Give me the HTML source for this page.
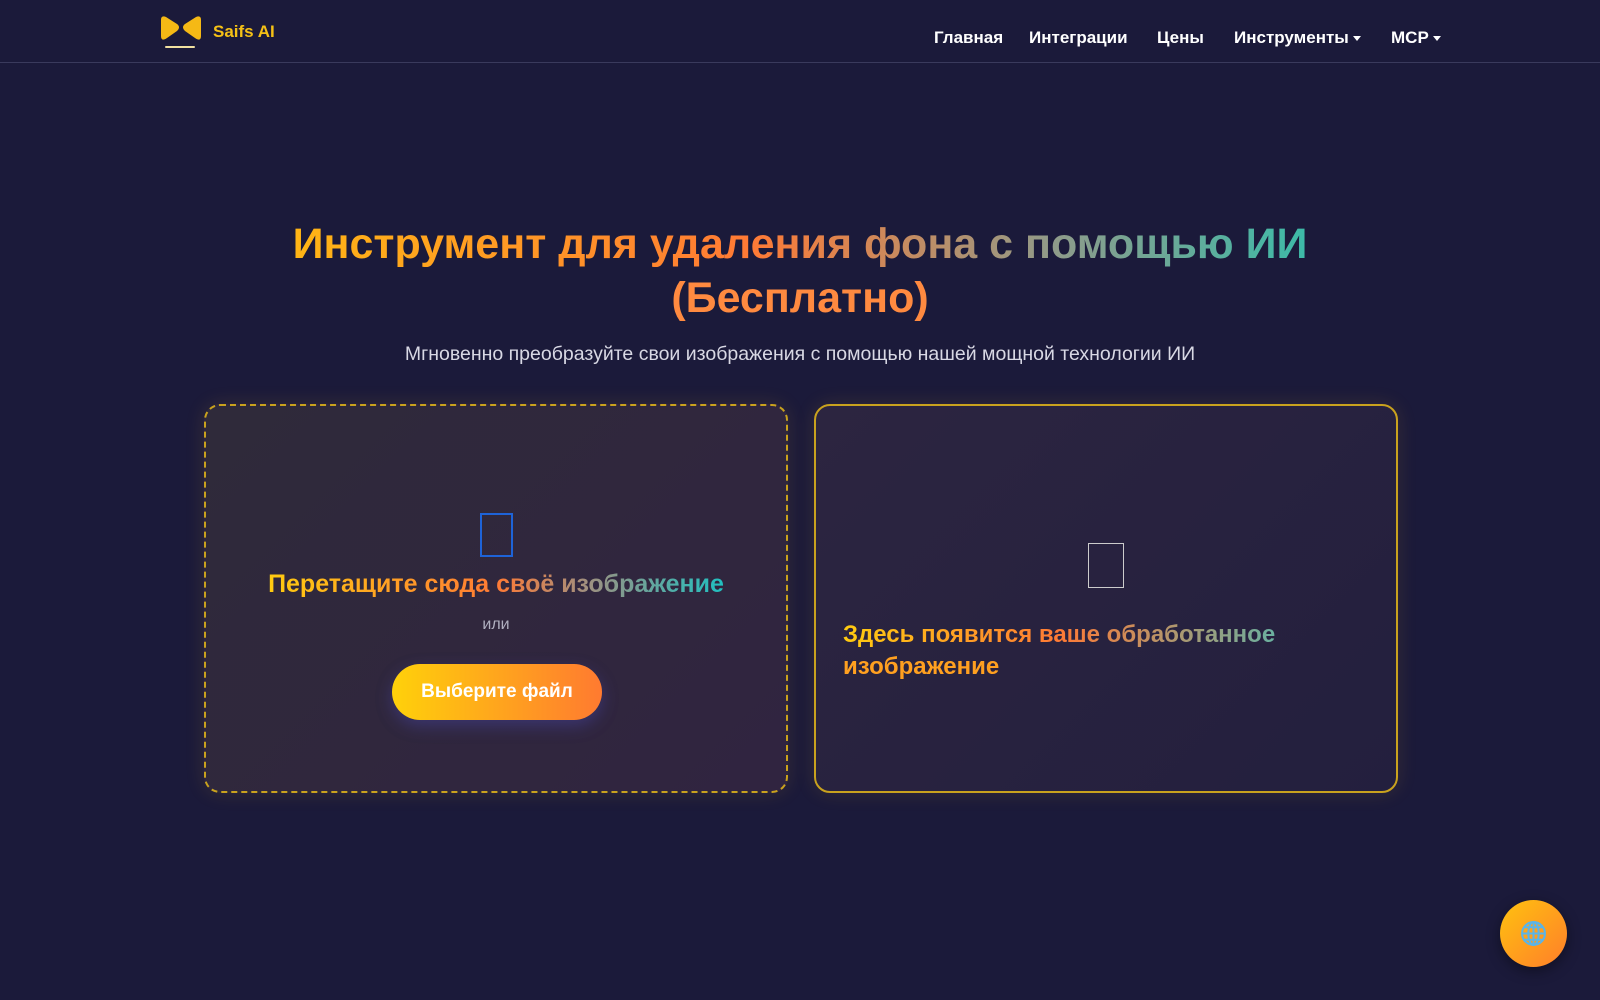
<!DOCTYPE html>
<html><head><meta charset="utf-8"><style>
*{margin:0;padding:0;box-sizing:border-box}
body{width:1600px;height:1000px;background:#1b1a3a;font-family:"Liberation Sans","DejaVu Sans",sans-serif;position:relative;overflow:hidden;color:#fff}
.hdr{position:absolute;left:0;top:0;width:1600px;height:63px;border-bottom:1px solid #3a3a5c}
.logo{position:absolute;left:159px;top:15px}
.brand{position:absolute;left:213px;top:22px;font-weight:bold;font-size:17px;color:#f5c116}
.nav a{position:absolute;top:28px;font-weight:bold;font-size:17px;color:#fff;text-decoration:none;white-space:nowrap}
.car{display:inline-block;width:0;height:0;border-left:4px solid transparent;border-right:4px solid transparent;border-top:5px solid #fff;vertical-align:middle;margin-left:4px}
.grad{background:linear-gradient(90deg,#ffb515 0%,#ff7a35 45%,#8f9b8a 75%,#3dbaa8 100%);-webkit-background-clip:text;background-clip:text;color:transparent}
h1{position:absolute;left:0;width:1600px;text-align:center;font-size:43px;font-weight:bold;line-height:54px}
.sub{position:absolute;top:343px;width:1600px;text-align:center;font-size:19.5px;color:#d8d8e4}
.card{position:absolute;top:404px;width:584px;height:389px;border-radius:16px;background:linear-gradient(135deg,#2f2a3a,#302440);box-shadow:0 0 20px rgba(255,180,40,.12)}
.l{left:204px;border:2px dashed #c9a21e}
.r{left:814px;border:2px solid #c9a21e;background:linear-gradient(135deg,#2c2540,#231f3e)}
.btn{position:absolute;left:186px;top:258px;width:210px;height:56px;border-radius:28px;background:linear-gradient(90deg,#ffd10a,#ff7a30);font-weight:bold;font-size:19px;text-align:center;line-height:56px;box-shadow:0 6px 16px rgba(80,80,200,.35)}
.globe{position:absolute;left:1500px;top:900px;width:67px;height:67px;border-radius:50%;background:linear-gradient(135deg,#ffc20f,#ff7e2a);box-shadow:0 4px 14px rgba(0,0,0,.4)}
</style></head><body>
<div class="hdr">
<svg class="logo" width="44" height="36" viewBox="0 0 44 36"><path d="M2 5 Q2 0 7 2 L18 9 Q22 12 18 16 L8 23 Q2 27 2 21Z" fill="#f5b915"/><path d="M42 5 Q42 0 37 2 L26 9 Q22 12 26 16 L36 23 Q42 27 42 21Z" fill="#f5b915"/><rect x="6" y="31" width="30" height="2" rx="1" fill="#f0e0a0"/></svg>
<div class="brand">Saifs AI</div>
<div class="nav"><a style="left:934px">Главная</a><a style="left:1029px">Интеграции</a><a style="left:1157px">Цены</a><a style="left:1234px">Инструменты<span class="car"></span></a><a style="left:1391px">MCP<span class="car"></span></a></div>
</div>
<h1 style="top:217px"><span class="grad">Инструмент для удаления фона с помощью ИИ</span></h1>
<h1 style="top:271px"><span class="grad" style="background:#ff8a40;-webkit-background-clip:text;background-clip:text">(Бесплатно)</span></h1>
<div class="sub">Мгновенно преобразуйте свои изображения с помощью нашей мощной технологии ИИ</div>
<div class="card l">
<div style="position:absolute;left:274px;top:107px;width:33px;height:44px;border:2px solid #1e63d8"></div>
<div style="position:absolute;left:0;top:164px;width:580px;text-align:center;font-size:25px;font-weight:bold"><span class="grad" style="background:linear-gradient(90deg,#ffcc10,#ff7a35 50%,#a09080 70%,#20c0c0);-webkit-background-clip:text;background-clip:text">Перетащите сюда своё изображение</span></div>
<div style="position:absolute;left:0;top:210px;width:580px;text-align:center;font-size:16px;color:#b0b0c0">или</div>
<div class="btn">Выберите файл</div>
</div>
<div class="card r">
<div style="position:absolute;left:272px;top:137px;width:36px;height:45px;border:1.5px solid #ccc"></div>
<div style="position:absolute;left:27px;top:213px;font-size:24px;line-height:32px;font-weight:bold"><span class="grad" style="background:linear-gradient(90deg,#ffcc10,#ff7a35 50%,#6ab0a0);-webkit-background-clip:text;background-clip:text">Здесь появится ваше обработанное</span><br><span style="color:#ffa020">изображение</span></div>
</div>
<div class="globe"><svg style="position:absolute;left:20px;top:20px" width="27" height="27" viewBox="0 0 26 26" fill="none" stroke="#5ab4e8" stroke-width="2"><circle cx="13" cy="13" r="11"/><ellipse cx="13" cy="13" rx="5" ry="11"/><line x1="2" y1="13" x2="24" y2="13"/><line x1="4" y1="7" x2="22" y2="7"/><line x1="4" y1="19" x2="22" y2="19"/><line x1="13" y1="2" x2="13" y2="24"/></svg></div>
</body></html>
